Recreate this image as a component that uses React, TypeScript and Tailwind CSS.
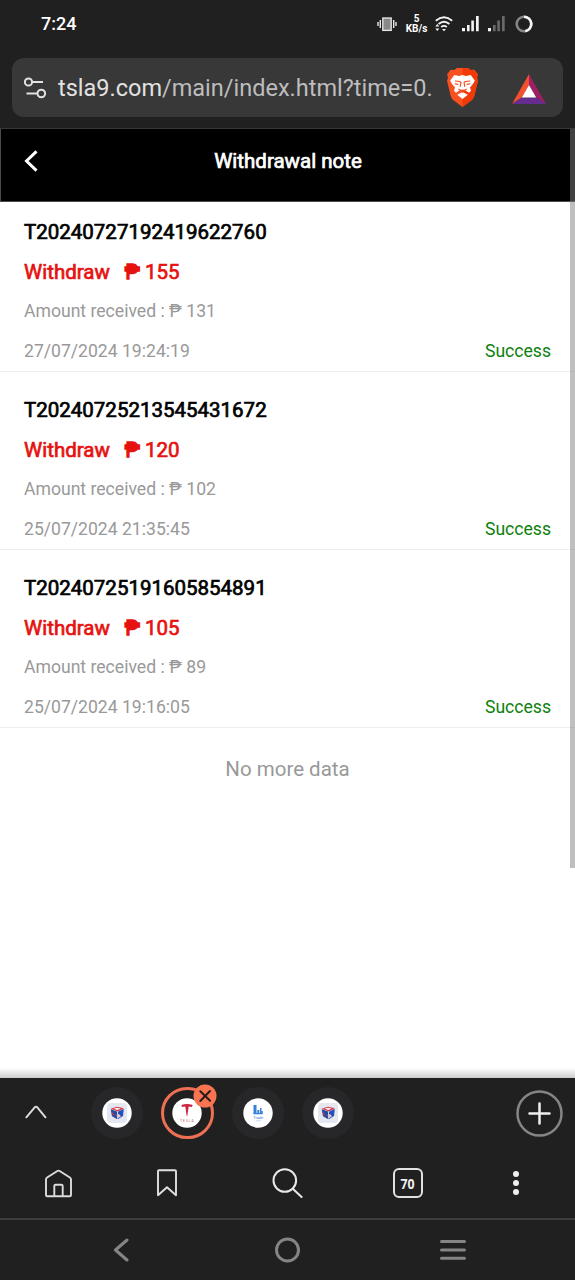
const records = [
  { id: "T20240727192419622760", amount: 155, received: 131, time: "27/07/2024 19:24:19" },
  { id: "T20240725213545431672", amount: 120, received: 102, time: "25/07/2024 21:35:45" },
  { id: "T20240725191605854891", amount: 105, received: 89, time: "25/07/2024 19:16:05" },
];

function StatusBar() {
  return (
    <div className="flex h-[58px] items-start bg-[#202020] text-white">
      <span className="ml-[41px] mt-[12px] w-[60px] text-[18px] font-medium leading-6">7:24</span>
      <div className="ml-auto flex h-[47px] items-center">
        <svg className="mr-[8px]" width="20" height="16" viewBox="0 0 20 16">
          <rect x="5.8" y="2" width="8.4" height="12.4" fill="#888" stroke="#e8e8e8" strokeWidth="1.3" />
          <path d="M3.3 4v8M1 6v4M16.7 4v8M19 6v4" stroke="#e8e8e8" strokeWidth="1.4" />
        </svg>
        <div className="w-[23px] text-center text-[10px] font-bold leading-[10px]">
          <div>5</div>
          <div className="whitespace-nowrap text-[10px]">KB/s</div>
        </div>
        <svg className="ml-[7px]" width="18" height="16" viewBox="0 0 18 16" fill="none" stroke="#f4f4f4" strokeWidth="1.8">
          <path d="M.8 4.7Q9-2.2 17.2 4.7M3.6 8Q9 3.4 14.4 8M6.2 11Q9 8.7 11.8 11" />
          <path d="M9 15.2l-2-2.2h4z" fill="#f4f4f4" stroke="none" />
          <path d="M2.3 8l2 2.5H.3zM2.3 15l2-2.5H.3zM5 13.4h1" fill="#f4f4f4" stroke="none" />
        </svg>
        <svg className="ml-[9px]" width="17" height="16" viewBox="0 0 17 16" fill="#f4f4f4">
          <path d="M0 12h3v3.3H0zM5 9h2.6v6.3H5zM9.3 4.5h2.6v10.8H9.3zM14 0h2.7v15.3H14z" />
        </svg>
        <svg className="ml-[9px]" width="17" height="16" viewBox="0 0 17 16" fill="#696969">
          <path d="M0 12h3v3.3H0z" fill="#f4f4f4" />
          <path d="M5 9h2.6v6.3H5zM9.3 4.5h2.6v10.8H9.3zM14 0h2.7v15.3H14z" />
        </svg>
        <svg className="ml-[10px] mr-[42px]" width="18" height="18" viewBox="0 0 18 18" fill="none" strokeWidth="2.6">
          <circle cx="9" cy="9" r="7.3" stroke="#858585" />
          <path d="M9 1.7a7.3 7.3 0 0 1 1.2 14.5" stroke="#f4f4f4" />
        </svg>
      </div>
    </div>
  );
}

function BraveLogo() {
  return (
    <svg width="33" height="39" viewBox="0 0 32 38">
      <path d="M8 2L10.500 0h11L24 2l3.500-.4L31 6l-.8 3 .8 4-3.500 14c-.6 2.500-2 4-4 5.500L16 38l-7.500-5.500c-2-1.500-3.400-3-4-5.500L1 13l.8-4L1 6l3.500-4.400z" fill="#f8501f" />
      <path d="M16 0h5.500L24 2l3.500-.4L31 6l-.8 3 .8 4-3.500 14c-.6 2.500-2 4-4 5.500L16 38z" fill="#f23a08" />
      <path d="M8 6.800l4.800.9L16 6.700l3.200 1L24 6.800l4 5.500c-1 3-2.800 4.500-4.700 6.700l1 3.200-2 1.800-4-2.500-2.300-.6-2.300.6-4 2.500-2-1.800 1-3.200C6.800 16.800 5 15.300 4 12.300z" fill="#fff" />
      <path d="M16 23.300l5.200 2.800L16 30.200l-5.200-4.100z" fill="#fff" />
      <path d="M8.500 12.700l5 .5 1 1.200-.8 4M23.500 12.700l-5 .5-1 1.200.8 4M8.500 15.300l3.500.7M23.500 15.300l-3.500.7M12 20.500l4 2.300 4-2.300M16 22.500v1.500" stroke="#f5491a" strokeWidth="1.100" fill="none" />
    </svg>
  );
}

function AddressBar() {
  return (
    <div className="h-[71px] border-b border-[#383838] bg-[#202020] px-3">
      <div className="flex h-[59px] items-center rounded-[12px] bg-[#383838]">
        <svg className="ml-[12px] shrink-0" width="23" height="22" viewBox="0 0 23 22" fill="none" stroke="#e2e2e2" strokeWidth="2">
          <circle cx="4.500" cy="5" r="3.600" />
          <path d="M8.500 5H19M2.500 16.500h10.800" />
          <circle cx="17.300" cy="16.500" r="3.800" />
        </svg>
        <div className="ml-[11px] mt-[3px] w-[390px] overflow-hidden whitespace-nowrap text-[23.500px] text-[#bdbdbd]">
          <span className="text-[#e2e2e2]">tsla9.com</span>/main/index.html?time=0.
        </div>
        <div className="-ml-px mr-[33px] shrink-0">
          <BraveLogo />
        </div>
        <svg className="mr-[17px] mt-[3px] shrink-0" width="34" height="30" viewBox="0 0 34 30">
          <path d="M17 0L0 30l9.800-6.500L17 11z" fill="#f4502f" />
          <path d="M17 0l17 30-9.800-6.500L17 11z" fill="#9e1f63" />
          <path d="M0 30h34l-9.800-6.500H9.800z" fill="#662d91" />
          <path d="M17 11l7.200 12.500H9.800z" fill="#fff" />
        </svg>
      </div>
    </div>
  );
}

function WithdrawalRecord({ id, amount, received, time }: (typeof records)[number]) {
  return (
    <li className="border-b border-[#ededed] px-6 pt-[19.200px] text-[17.600px] text-[#999] first:pt-[11px] *:h-[39.700px] *:leading-[39.700px] *:last:h-[38.700px]">
      <div className="text-[20.500px] text-black [-webkit-text-stroke:0.700px_currentColor]">{id}</div>
      <div className="flex text-[20.500px] text-[#e6120f] [-webkit-text-stroke:0.700px_currentColor]">
        <span className="mr-[15px]">Withdraw</span>
        <span>
          <span className="[-webkit-text-stroke:1.300px_currentColor]">₱</span> {amount}
        </span>
      </div>
      <div>Amount received : ₱ {received}</div>
      <div className="flex justify-between">
        <span>{time}</span>
        <span className="text-[#0d810d]">Success</span>
      </div>
    </li>
  );
}

function CubeIcon() {
  return (
    <svg width="30" height="30" viewBox="0 0 30 30">
      <circle cx="15" cy="15" r="14.700" fill="#fff" />
      <rect x="5" y="5" width="20" height="20" rx="4" fill="#e4e7ef" />
      <path d="M8.700 10.800L15 8.700l6.800 1.600-5.800 3.200z" fill="#d63346" />
      <path d="M8.700 11.200l6.300 2.300.3 7.700-5.300-3z" fill="#234a9e" />
      <path d="M16 13.700l5.800-3-.8 7.300-5.200 3.200z" fill="#2450bc" />
      <path d="M11.500 10.700l3.500-1 3.800.7-3.300 1.600z" fill="#f5f5fc" />
      <path d="M14.500 17l2.500-1 2 2.300-3.200 2.200z" fill="#eac3c4" />
      <path d="M10 14.500l2 3" stroke="#d63346" strokeWidth="1.300" />
    </svg>
  );
}

function TeslaIcon() {
  return (
    <svg width="30" height="30" viewBox="0 0 30 30">
      <circle cx="15" cy="15" r="14.700" fill="#fff" />
      <path d="M9.300 7q5.700-2 11.400 0l-.9 2-3.100-.4L15.300 18h-.6L13.300 8.600l-3.100.4z" fill="#ce2342" />
      <text x="15.400" y="23.800" textAnchor="middle" fontSize="3" letterSpacing="1.100" fill="#c23a55" fontFamily="Roboto">TESLA</text>
    </svg>
  );
}

function TradeIcon() {
  return (
    <svg width="30" height="30" viewBox="0 0 30 30">
      <circle cx="15" cy="15" r="14.700" fill="#fff" />
      <path d="M10.500 7h3v9h-3zM14.300 12h2v4h-2zM17 10h1.500v6H17z" fill="#377fdc" />
      <path d="M10.500 15h9v1.200h-9zM18.300 13h1.500v3h-1.500z" fill="#377fdc" />
      <text x="15.200" y="21" textAnchor="middle" fontSize="4" fill="#477ccb" fontFamily="Roboto">Trade</text>
      <path d="M13 22.700h5" stroke="#b9cfef" strokeWidth=".8" />
    </svg>
  );
}

function TabStrip() {
  return (
    <div className="flex h-[70px] items-center bg-[#202020]">
      <svg className="mb-[3px] ml-[25px]" width="22" height="14" viewBox="0 0 22 14" fill="none" stroke="#dedede" strokeWidth="1.900" strokeLinecap="round" strokeLinejoin="round">
        <path d="M1.300 12.300l8.400-10q1.300-1.200 2.600 0l8.200 10" />
      </svg>
      <div className="ml-[44px] flex gap-[18px] *:flex *:size-[52.300px] *:items-center *:justify-center *:rounded-full">
        <div className="bg-[#27272a]"><CubeIcon /></div>
        <div className="relative border-[3px] border-[#ee7054]">
          <TeslaIcon />
          <svg className="absolute -right-[6px] -top-[6px]" width="24" height="24" viewBox="0 0 24 24">
            <circle cx="12" cy="12" r="11.500" fill="#f97551" />
            <path d="M7.300 7.300l9.800 9.400M17 7L7.300 17" stroke="#281b18" strokeWidth="2" strokeLinecap="round" />
          </svg>
        </div>
        <div className="bg-[#27272a]"><TradeIcon /></div>
        <div className="bg-[#27272a]"><CubeIcon /></div>
      </div>
      <svg className="ml-auto mr-[12px]" width="47" height="47" viewBox="0 0 47 47" fill="none">
        <circle cx="23.500" cy="23.500" r="22" stroke="#858585" strokeWidth="2.500" />
        <path d="M23.500 13.500v20M13.500 23.500h20" stroke="#efefef" strokeWidth="2.500" strokeLinecap="round" />
      </svg>
    </div>
  );
}

function BrowserToolbar() {
  return (
    <div className="flex h-[72px] items-center border-b-2 border-[#3e3e3e] bg-[#202020]">
      <svg className="ml-[44px]" width="29" height="29" viewBox="0 0 29 29" fill="none" stroke="#dcdcdc" strokeWidth="1.900" strokeLinejoin="round">
        <path d="M2 10.500q0-1.300 1.100-2L13.400 2q1.100-.7 2.200 0l10.300 6.500q1.100.7 1.100 2V26q0 1.300-1.300 1.300H3.300Q2 27.300 2 26z" />
        <path d="M10.300 27V17q0-1.300 1.300-1.300h5.800q1.300 0 1.300 1.300v10" />
      </svg>
      <svg className="ml-[84px]" width="20" height="28" viewBox="0 0 20 28" fill="none" stroke="#e0e0e0" strokeWidth="1.900" strokeLinejoin="round">
        <path d="M1 2.300Q1 1.200 2.100 1.200h15.800q1.100 0 1.100 1.100v23.900l-9-8-9 8z" />
      </svg>
      <svg className="ml-[95px]" width="31" height="31" viewBox="0 0 31 31" fill="none" stroke="#e8e8e8" strokeWidth="2" strokeLinecap="round">
        <circle cx="12.800" cy="12.500" r="11.300" />
        <path d="M20.800 20.700l8.800 8.300" />
      </svg>
      <div className="ml-[90px] flex size-[30px] items-center justify-center rounded-[6px] border-2 border-[#e2e2e2] font-['Open_Sans',sans-serif] text-[15px] font-bold leading-none text-[#f0f0f0]">
        <span className="scale-x-[.82]">70</span>
      </div>
      <svg className="ml-[89px]" width="8" height="24" viewBox="0 0 8 24" fill="#efefef">
        <circle cx="4" cy="3.100" r="3" />
        <circle cx="4" cy="12" r="3" />
        <circle cx="4" cy="20.900" r="3" />
      </svg>
    </div>
  );
}

function SystemNav() {
  return (
    <div className="flex h-[60px] items-center bg-[#202020] pb-px">
      <svg className="ml-[112px]" width="18" height="24" viewBox="0 0 18 24" fill="none" stroke="#858585" strokeWidth="3" strokeLinecap="round" strokeLinejoin="round">
        <path d="M15 2L3.500 12 15 22" />
      </svg>
      <svg className="ml-[144px]" width="27" height="26" viewBox="0 0 27 26" fill="none" stroke="#858585" strokeWidth="3">
        <circle cx="13.500" cy="13" r="11" />
      </svg>
      <svg className="ml-[139px]" width="26" height="22" viewBox="0 0 26 22" stroke="#858585" strokeWidth="3" strokeLinecap="round">
        <path d="M1.500 2.500h23M1.500 11h23M1.500 19.300h23" />
      </svg>
    </div>
  );
}

export default function App() {
  return (
    <div className="flex h-[1280px] w-[575px] flex-col overflow-hidden bg-white font-[Roboto,sans-serif]">
      <StatusBar />
      <AddressBar />
      <main className="relative min-h-0 flex-1">
        <header className="grid h-[73px] grid-cols-[60px_1fr_60px] items-start border-b border-l border-[#4a4a4a] bg-black pt-[20px] text-white">
          <svg className="ml-[23px] mt-px" width="16" height="22" viewBox="0 0 16 22" fill="none" stroke="#fff" strokeWidth="3">
            <path d="M12.500 1.300L2.500 11l10 9.700" />
          </svg>
          <h1 className="text-center text-[20.500px] leading-6 [-webkit-text-stroke:0.700px_currentColor]">Withdrawal note</h1>
        </header>
        <ul>
          {records.map((record) => (
            <WithdrawalRecord key={record.id} {...record} />
          ))}
        </ul>
        <p className="mt-[29.600px] text-center text-[20.500px] leading-6 text-[#999]">No more data</p>
        {/* Overlay scrollbar thumb */}
        <div className="absolute right-0 top-0 h-[739px] w-[5px] bg-[#808080]/50" />
        <div className="absolute inset-x-0 bottom-0 h-[10px] bg-linear-to-b from-transparent to-black/20" />
      </main>
      <TabStrip />
      <BrowserToolbar />
      <SystemNav />
    </div>
  );
}
